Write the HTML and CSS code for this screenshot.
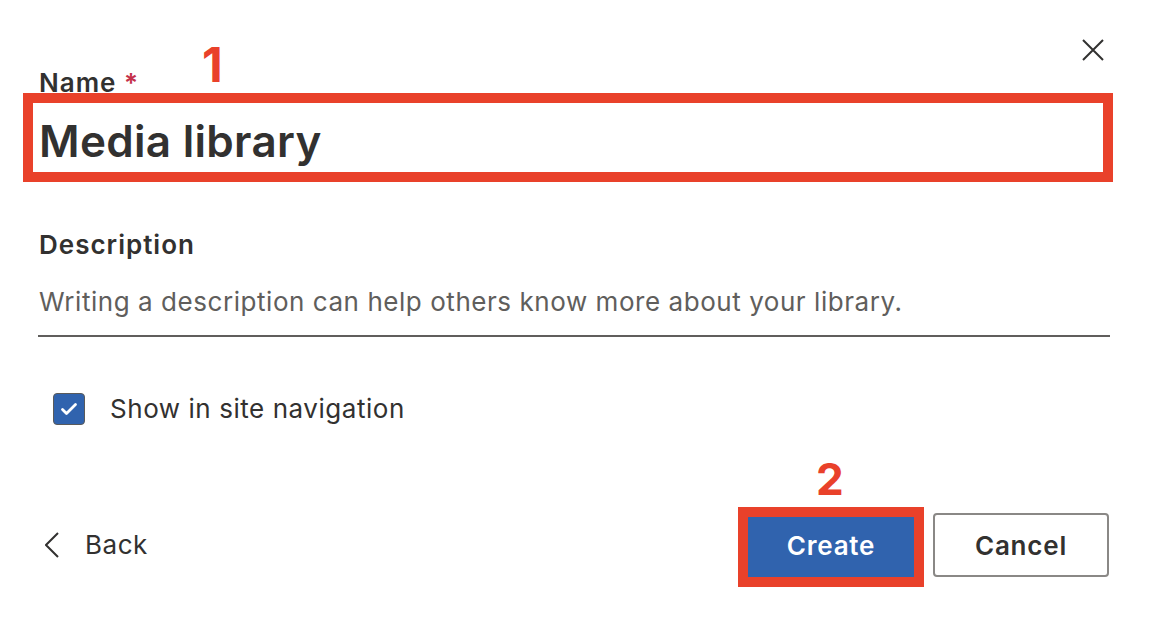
FILE: index.html
```html
<!DOCTYPE html>
<html lang="en">
<head>
<meta charset="utf-8">
<title>Create library</title>
<link rel="stylesheet" href="styles.css">
</head>
<body>
<div class="dialog">
  <div class="header">
    <button class="close" aria-label="Close">
      <svg width="22" height="22" viewBox="0 0 22 22"><path d="M1 1 L21 21 M21 1 L1 21" stroke="#323130" stroke-width="2" fill="none"/></svg>
    </button>
  </div>

  <label class="label label-name">Name <span class="req">*</span></label>
  <div class="name-field">
    <div class="name-value">Media library</div>
    <div class="highlight hl-name"></div>
  </div>

  <label class="label label-desc">Description</label>
  <div class="desc-input">Writing a description can help others know more about your library.</div>

  <div class="check-row">
    <span class="checkbox">
      <svg width="18" height="14" viewBox="0 0 18 14"><path d="M2.5 7.5 L6.5 11.5 L15.5 2.5" stroke="#fff" stroke-width="2.8" fill="none" stroke-linecap="round" stroke-linejoin="round"/></svg>
    </span>
    <span class="check-label">Show in site navigation</span>
  </div>

  <div class="footer">
    <button class="back">
      <svg width="14" height="26" viewBox="0 0 14 26"><path d="M13 1 L1 13 L13 25" stroke="#323130" stroke-width="2" fill="none"/></svg>
      <span>Back</span>
    </button>
    <div class="actions">
      <div class="create-wrap">
        <button class="btn btn-primary">Create</button>
        <div class="highlight hl-create"></div>
      </div>
      <button class="btn btn-default">Cancel</button>
    </div>
  </div>

  <div class="badge badge-1">1</div>
  <div class="badge badge-2">2</div>
</div>
</body>
</html>
```

FILE: styles.css
```css
html, body {
  margin: 0;
  padding: 0;
  background: #ffffff;
}

body {
  font-family: Inter, "Open Sans", "Liberation Sans", sans-serif;
  color: #323130;
}

.dialog {
  position: relative;
  width: 1150px;
  height: 634px;
  box-sizing: border-box;
  padding: 39px 40px 0 39px;
  overflow: hidden;
}

.header {
  display: flex;
  justify-content: flex-end;
  height: 22px;
}

.close {
  width: 22px;
  height: 22px;
  padding: 0;
  margin-right: 6px;
  border: none;
  background: none;
  display: block;
}

.close svg { display: block; }

.label {
  display: block;
  font-size: 26px;
  line-height: 28px;
  font-weight: 600;
  letter-spacing: 1px;
  color: #323130;
}

.label-name { margin-top: 8px; }

.req { color: #c4314b; font-weight: 600; }

.name-field {
  position: relative;
  margin-top: 18px;
}

.name-value {
  font-size: 44px;
  line-height: 53px;
  font-weight: 600;
  color: #323130;
  letter-spacing: 0.3px;
}

.highlight {
  position: absolute;
  border: 10px solid #e9412a;
  box-sizing: border-box;
  pointer-events: none;
}

.hl-name {
  left: -16px;
  right: -3px;
  top: -22px;
  bottom: -14px;
}

.label-desc { margin-top: 63px; }

.desc-input {
  padding: 28px 0 18px 1px;
  margin-left: -1px;
  font-size: 26px;
  line-height: 30px;
  letter-spacing: 0.55px;
  color: #605e5c;
  border-bottom: 2px solid #605e5c;
}

.check-row {
  display: flex;
  align-items: center;
  margin-top: 56px;
  height: 32px;
}

.checkbox {
  width: 32px;
  height: 32px;
  box-sizing: border-box;
  margin-left: 14px;
  background: #3063ae;
  border: 1px solid #5a5a5a;
  border-radius: 4px;
  display: flex;
  align-items: center;
  justify-content: center;
}

.checkbox svg { display: block; }

.check-label {
  margin-left: 25px;
  font-size: 26px;
  line-height: 30px;
  letter-spacing: 0.55px;
  color: #323130;
}

.footer {
  display: flex;
  align-items: center;
  justify-content: space-between;
  margin-top: 88px;
  height: 64px;
}

.back {
  display: flex;
  align-items: center;
  padding: 0;
  border: none;
  background: none;
  font-family: inherit;
  font-size: 26px;
  line-height: 30px;
  letter-spacing: 0.55px;
  color: #323130;
  margin-left: 6px;
}

.back svg { display: block; }

.back span { margin-left: 26px; }

.actions {
  display: flex;
  align-items: center;
  gap: 14px;
  margin-right: 1px;
}

.create-wrap {
  position: relative;
}

.btn {
  display: block;
  width: 176px;
  height: 64px;
  box-sizing: border-box;
  font-family: inherit;
  font-size: 26px;
  font-weight: 600;
  letter-spacing: 0.8px;
  border-radius: 4px;
  padding: 0;
}

.btn-primary {
  background: #3063ae;
  border: 2px solid #3063ae;
  color: #ffffff;
}

.btn-default {
  background: #ffffff;
  border: 2px solid #8a8886;
  color: #323130;
}

.hl-create {
  left: -5px;
  right: -5px;
  top: -6px;
  bottom: -10px;
}

.badge {
  position: absolute;
  color: #e9412a;
  font-weight: 700;
  line-height: 1;
}

.badge-1 {
  left: 202px;
  top: 41px;
  font-size: 48px;
}

.badge-2 {
  left: 816px;
  top: 457px;
  font-size: 44px;
}
```
